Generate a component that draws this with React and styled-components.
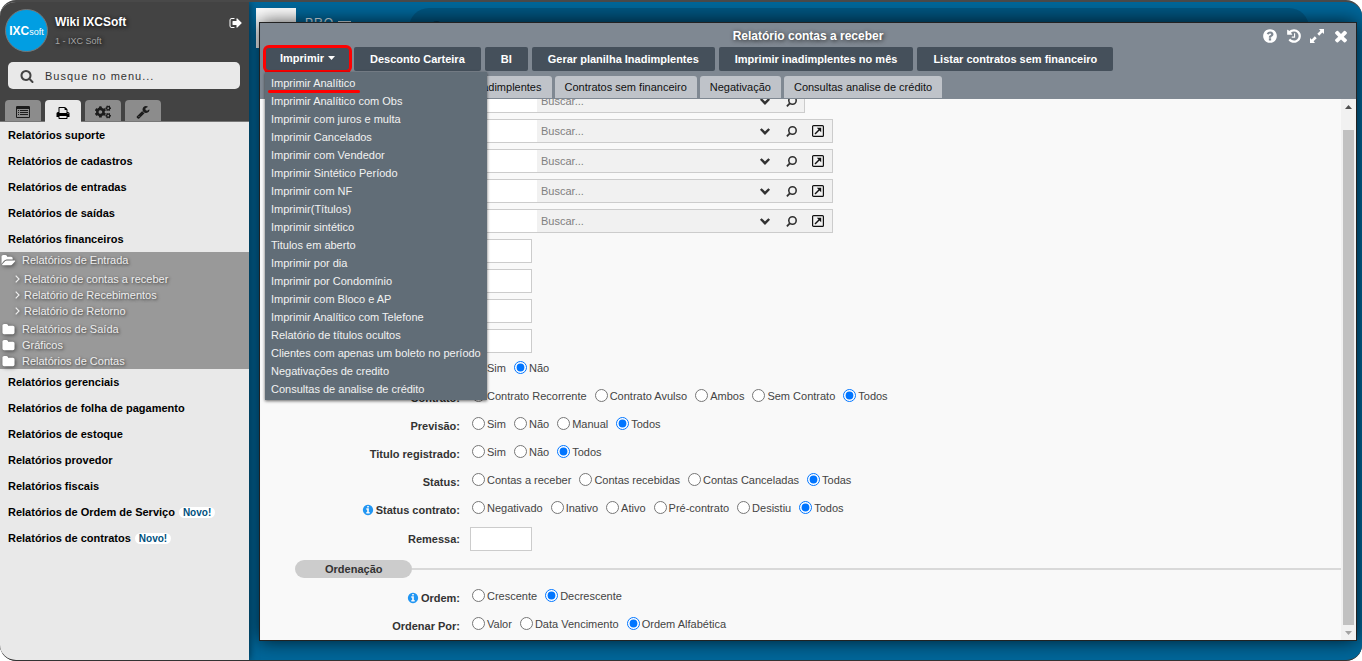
import React, { useLayoutEffect, useRef } from 'react';
import styled, { createGlobalStyle, css } from 'styled-components';
import { FaCogs } from 'react-icons/fa';

const GlobalStyle = createGlobalStyle`
  *, *::before, *::after { box-sizing: border-box; }
  body {
    margin: 0;
    background: #fff;
    color: #444;
    font: 11px/16px "Liberation Sans", Arial, sans-serif;
  }
  button, input { font: inherit; color: inherit; }
  ul { list-style: none; margin: 0; padding: 0; }
  a { color: inherit; text-decoration: none; }
`;

/* ---------- icons ---------- */

const GLYPHS = {
  search:
    'M1216 832q0-185-131.5-316.5t-316.5-131.5-316.5 131.5-131.5 316.5 131.5 316.5 316.5 131.5 316.5-131.5 131.5-316.5zm512 832q0 52-38 90t-90 38q-54 0-90-38l-343-342q-179 124-399 124-143 0-273.5-55.5t-225-150-150-225-55.5-273.5 55.5-273.5 150-225 225-150 273.5-55.5 273.5 55.5 225 150 150 225 55.5 273.5q0 220-124 399l343 343q37 37 37 90z',
  signOut:
    'M704 1440q0 4 1 20t.5 26.5-3 23.5-10 19.5-20.5 6.5h-320q-119 0-203.5-84.5t-84.5-203.5v-704q0-119 84.5-203.5t203.5-84.5h320q13 0 22.5 9.5t9.5 22.5q0 4 1 20t.5 26.5-3 23.5-10 19.5-20.5 6.5h-320q-66 0-113 47t-47 113v704q0 66 47 113t113 47h312l11.5 1 11.5 3 8 5.5 7 9 2 13.5zm928-544q0 26-19 45l-544 544q-19 19-45 19t-45-19-19-45v-288h-448q-26 0-45-19t-19-45v-384q0-26 19-45t45-19h448v-288q0-26 19-45t45-19 45 19l544 544q19 19 19 45z',
  list:
    'M160 128h1472q66 0 113 47t47 113v1216q0 66-47 113t-113 47h-1472q-66 0-113-47t-47-113v-1216q0-66 47-113t113-47zM128 512v992q0 32 32 32h1472q32 0 32-32v-992zM256 640h128v128h-128zM512 640h1024v128h-1024zM256 896h128v128h-128zM512 896h1024v128h-1024zM256 1152h128v128h-128zM512 1152h1024v128h-1024z',
  print:
    'M448 1536h896v-256h-896v256zm0-640h896v-384h-160q-40 0-68-28t-28-68v-160h-640v640zm1152 64q0-26-19-45t-45-19-45 19-19 45 19 45 45 19 45-19 19-45zm128 0v416q0 13-9.500 22.500t-22.500 9.500h-224v160q0 40-28 68t-68 28h-960q-40 0-68-28t-28-68v-160h-224q-13 0-22.500-9.500t-9.500-22.500v-416q0-79 56.500-135.500t135.500-56.500h64v-544q0-40 28-68t68-28h672q40 0 88 20t76 48l152 152q28 28 48 76t20 88v256h64q79 0 135.500 56.500t56.500 135.500z',
  wrench:
    'M448 1472q0-26-19-45t-45-19-45 19-19 45 19 45 45 19 45-19 19-45zm644-420l-682 682q-37 37-90 37-52 0-91-37l-106-108q-38-36-38-90 0-53 38-91l681-681q39 98 114.5 173.5t173.5 114.500zm634-435q0 39-23 106-47 134-164.5 217.5t-258.5 83.5q-185 0-316.500-131.500t-131.500-316.500 131.500-316.500 316.500-131.500q58 0 121.500 16.500t107.500 46.500q16 11 16 28t-16 28l-293 169v224l193 107q5-3 79-48.500t135.500-81 70.500-35.500q15 0 23.500 10t8.500 25z',
  folder:
    'M1728 608v704q0 92-66 158t-158 66h-1216q-92 0-158-66t-66-158v-960q0-92 66-158t158-66h320q92 0 158 66t66 158v32h672q92 0 158 66t66 158z',
  folderOpen:
    'M1815 952q0 31-31 66l-336 396q-43 51-120.5 86.5t-143.5 35.5h-1088q-34 0-60.5-13t-26.5-43q0-31 31-66l336-396q43-51 120.5-86.5t143.5-35.5h1088q34 0 60.5 13t26.5 43zm-343-344v160h-832q-94 0-197 47.5t-164 119.5l-337 396-5 6q0-4-.5-12.5t-.5-12.5v-960q0-92 66-158t158-66h320q92 0 158 66t66 158v32h544q92 0 158 66t66 158z',
  question:
    'M1024 1376v-192q0-14-9-23t-23-9h-192q-14 0-23 9t-9 23v192q0 14 9 23t23 9h192q14 0 23-9t9-23zm256-672q0-88-55.5-163t-138.5-116-170-41q-243 0-371 213-15 24 8 42l132 100q7 6 19 6 16 0 25-12 53-68 86-92 34-24 86-24 48 0 85.5 26t37.5 59q0 38-20 61t-68 45q-63 28-115.5 86.5t-52.5 125.5v36q0 14 9 23t23 9h192q14 0 23-9t9-23q0-19 21.5-49.5t54.5-49.5q32-18 49-28.5t46-35 44.5-48 28-60.5 12.5-81zm384 192q0 209-103 385.5t-279.5 279.5-385.5 103-385.5-103-279.5-279.5-103-385.5 103-385.5 279.5-279.5 385.5-103 385.5 103 279.5 279.5 103 385.5z',
  history:
    'M1664 896q0 156-61 298t-164 245-245 164-298 61q-172 0-327-72.5t-264-204.5q-7-10-6.5-22.5t8.5-20.5l137-138q10-9 25-9 16 2 23 12 73 95 179 147t225 52q104 0 198.5-40.5t163.5-109.5 109.5-163.5 40.5-198.5-40.5-198.5-109.5-163.5-163.5-109.5-198.5-40.5q-98 0-188 35.5t-160 101.5l137 138q31 30 14 69-17 40-59 40h-448q-26 0-45-19t-19-45v-448q0-42 40-59 39-17 69 14l130 129q107-101 244.5-156.5t284.5-55.5q156 0 298 61t245 164 164 245 61 298zm-640-288v448q0 14-9 23t-23 9h-320q-14 0-23-9t-9-23v-64q0-14 9-23t23-9h224v-352q0-14 9-23t23-9h64q14 0 23 9t9 23z',
  times:
    'M1490 1322q0 40-28 68l-136 136q-28 28-68 28t-68-28l-294-294-294 294q-28 28-68 28t-68-28l-136-136q-28-28-28-68t28-68l294-294-294-294q-28-28-28-68t28-68l136-136q28-28 68-28t68 28l294 294 294-294q28-28 68-28t68 28l136 136q28 28 28 68t-28 68l-294 294 294 294q28 28 28 68z',
  info:
    'M1152 1376v-160q0-14-9-23t-23-9h-96v-512q0-14-9-23t-23-9h-320q-14 0-23 9t-9 23v160q0 14 9 23t23 9h96v320h-96q-14 0-23 9t-9 23v160q0 14 9 23t23 9h448q14 0 23-9t9-23zm-128-896v-160q0-14-9-23t-23-9h-192q-14 0-23 9t-9 23v160q0 14 9 23t23 9h192q14 0 23-9t9-23zm640 416q0 209-103 385.5t-279.5 279.5-385.5 103-385.5-103-279.5-279.5-103-385.5 103-385.5 279.5-279.5 385.5-103 385.5 103 279.5 279.5 103 385.5z',
};

const Svg = styled.svg`
  display: block;
  flex: none;
  overflow: visible;
`;

const Glyph = ({ name, size = 14 }) => (
  <Svg width={size} height={size} viewBox="0 0 1792 1792" fill="currentColor" fillRule={name === 'list' ? 'evenodd' : 'nonzero'} aria-hidden="true">
    <path d={GLYPHS[name]} />
  </Svg>
);

const ExpandIcon = () => (
  <Svg width="14" height="14" viewBox="0 0 14 14" fill="currentColor" aria-hidden="true">
    <path d="M9 0H14v5L12.300 3.600 9.200 6.700 7.300 4.800l3.100-3.100zM5 14H0V9l1.700 1.400L4.800 7.300 6.700 9.200l-3.100 3.100z" />
  </Svg>
);

const ChevronDown = () => (
  <Svg width="10" height="7" viewBox="0 0 10 7" fill="none" stroke="#333" strokeWidth="2.400" aria-hidden="true">
    <path d="M0.800 1L5 5.200 9.200 1" />
  </Svg>
);

const Loupe = () => (
  <Svg width="11" height="11" viewBox="0 0 11 11" fill="none" stroke="#333" aria-hidden="true">
    <circle cx="6.500" cy="4.500" r="3.700" strokeWidth="1.600" />
    <path d="M4 7.200L0.900 10.300" strokeWidth="1.900" />
  </Svg>
);

const OpenBox = () => (
  <Svg width="12" height="12" viewBox="0 0 12 12" fill="none" stroke="#111" aria-hidden="true">
    <rect x="0.600" y="0.600" width="10.800" height="10.800" rx="1" strokeWidth="1.200" />
    <path d="M3 9L7.500 4.500" strokeWidth="1.500" />
    <path d="M4.800 2.800H9.200v4.400z" fill="#111" stroke="none" />
  </Svg>
);

const AngleRight = () => (
  <Svg width="5" height="8" viewBox="0 0 5 8" fill="none" stroke="currentColor" strokeWidth="1.200" aria-hidden="true">
    <path d="M0.700 0.700L4 4 0.700 7.300" />
  </Svg>
);

const Triangle = ({ down, color }) => (
  <Svg width="7" height="4" viewBox="0 0 7 4" fill={color} aria-hidden="true">
    <path d={down ? 'M0 0h7L3.500 4z' : 'M0 4h7L3.500 0z'} />
  </Svg>
);

/* ---------- page frame ---------- */

const Frame = styled.div`
  display: flex;
  height: 100vh;
  overflow: hidden;
  border-top: 2px solid #494949;
  border-bottom: 1px solid #333;
  border-radius: 16px;
  background: #494949;
`;

const IconButton = styled.button`
  display: flex;
  align-items: center;
  justify-content: center;
  padding: 0;
  border: 0;
  background: none;
  cursor: pointer;
`;

/* ---------- sidebar ---------- */

const Sidebar = styled.aside`
  position: relative;
  z-index: 2;
  display: flex;
  flex: none;
  flex-direction: column;
  width: 249px;
  background: #e9e9e9;
  box-shadow: 0 0 8px rgba(0, 0, 0, 0.6);
`;

const SidebarTop = styled.header`
  padding: 7px 9px 0 5px;
  border-bottom: 1px solid #777;
  background: #434343;
`;

const Profile = styled.div`
  display: flex;
  align-items: flex-start;
  gap: 7px;
  color: #fff;
`;

const Logo = styled.div`
  display: flex;
  align-items: center;
  justify-content: center;
  width: 43px;
  height: 43px;
  border: 1px solid #777;
  border-radius: 50%;
  background: #019ee2;
  color: #fff;
  font: bold 12px/12px "Liberation Sans", Arial, sans-serif;
`;

const LogoSmall = styled.span`
  padding-top: 3px;
  font-size: 9px;
  font-weight: normal;
`;

const Who = styled.div`
  flex: 1;
  padding-top: 5px;
  text-shadow: 1px 1px 4px #000;
`;

const UserName = styled.div`
  font-weight: bold;
  font-size: 12px;
  line-height: 16px;
`;

const Company = styled.div`
  padding-top: 5px;
  color: #a5a5a5;
  font-size: 9px;
  line-height: 12px;
`;

const LogoutButton = styled(IconButton)`
  width: 8px;
  height: 14px;
  margin-top: 7px;
`;

const MenuSearch = styled.label`
  display: flex;
  align-items: center;
  gap: 11px;
  height: 27px;
  margin: 10px 0 11px 3px;
  padding: 0 12px;
  border-radius: 5px;
  background: #e9e9e9;
  color: #444;
`;

const MenuSearchInput = styled.input`
  flex: 1;
  min-width: 0;
  padding: 0;
  border: 0;
  outline: 0;
  background: none;
  letter-spacing: 1px;
  &::placeholder { color: #333; opacity: 1; }
`;

const SideTabs = styled.nav`
  display: flex;
  gap: 4px;
`;

const SideTab = styled(IconButton)`
  width: 36px;
  height: 21px;
  padding-top: 3px;
  border-radius: 4px 4px 0 0;
  background: ${(p) => (p.$active ? '#e9e9e9' : '#8c8c8c')};
  color: ${(p) => (p.$active ? '#000' : '#1c1c1c')};
  ${(p) => p.$active && css`margin-bottom: -1px; height: 22px;`}
`;

const MenuLink = styled.a`
  display: flex;
  align-items: center;
  gap: 4px;
  height: 26px;
  padding-left: 8px;
  color: #000;
  font-weight: bold;
`;

const Tag = styled.span`
  padding: 0 4px;
  border-radius: 6px;
  background: #fff;
  color: #00517e;
  font-size: 10px;
  line-height: 11px;
`;

const SubMenu = styled.ul`
  background: #999;
  color: #eee;
  text-shadow: 1px 1px 3px #333;
  svg { filter: drop-shadow(1px 1px 2px #444); }
`;

const FolderLink = styled.a`
  display: grid;
  grid-template-columns: 20px 1fr;
  align-items: center;
  height: 16px;
  padding-left: 2px;
  svg { color: #fff; }
`;

const LeafList = styled.ul`
  padding: 3px 0 2px 15px;
`;

const LeafLink = styled.a`
  display: grid;
  grid-template-columns: 9px 1fr;
  align-items: center;
  height: 16px;
`;

/* ---------- desktop and window ---------- */

const Desktop = styled.main`
  position: relative;
  flex: 1;
  min-width: 0;
  background: #006699;
`;

const AppBar = styled.div`
  display: flex;
  padding: 6px 53px 0 7px;
`;

const AppLogo = styled.div`
  width: 40px;
  height: 40px;
  background: #fff;
`;

const Brand = styled.div`
  display: flex;
  align-items: center;
  gap: 4px;
  width: 113px;
  height: 30px;
  padding-left: 9px;
  color: #dde9f0;
  font-size: 12px;
  letter-spacing: 1px;
`;

const BrandRule = styled.span`
  width: 13px;
  height: 4px;
  background: #dde9f0;
`;

const AppSearch = styled.div`
  flex: 1;
  height: 40px;
  padding: 12px 22px;
  border-radius: 20px;
  background: #005580;
  color: #003c5c;
`;

const Window = styled.section`
  position: absolute;
  inset: 20px 5px 19px 10px;
  display: flex;
  flex-direction: column;
  border: 1px solid #222;
  background: #f9f9f9;
  box-shadow: 0 0 18px rgba(0, 0, 0, 0.75);
`;

const WindowHead = styled.header`
  padding-left: 5px;
  border-bottom: 1px solid #7f8892;
  background: #7f8892;
`;

const TitleBar = styled.div`
  display: grid;
  grid-template-columns: 1fr auto 1fr;
  align-items: center;
  height: 24px;
  padding: 2px 6px 0 1px;
  color: #fff;
`;

const Title = styled.h1`
  grid-column: 2;
  margin: 0;
  font-size: 12px;
  line-height: 16px;
  text-shadow: 1px 1px 4px #222;
`;

const WindowTools = styled.div`
  display: flex;
  justify-content: flex-end;
  gap: 8px;
`;

const Actions = styled.div`
  display: flex;
  gap: 4px;
`;

const ActionButton = styled.button`
  display: flex;
  align-items: center;
  gap: 4px;
  height: 24px;
  padding: 0 16px;
  border: 0;
  border-radius: 2px;
  background: #45505b;
  color: #fff;
  font-weight: bold;
  white-space: nowrap;
  cursor: pointer;
  ${(p) => p.$marked && css`
    padding: 0 15px 2px;
    border-radius: 4px;
    box-shadow: 0 0 0 2px #f00, inset 0 0 0 1px #f00;
  `}
`;

const MenuAnchor = styled.div`
  position: relative;
`;

const PrintMenu = styled.ul`
  position: absolute;
  z-index: 5;
  top: 25px;
  left: 0;
  padding: 2px 0;
  background: #616d77;
  box-shadow: 0 1px 3px rgba(0, 0, 0, 0.6);
`;

const PrintItem = styled.button`
  position: relative;
  display: block;
  width: 100%;
  height: 18px;
  padding: 0 6px;
  border: 0;
  background: none;
  color: #f2f2f2;
  text-align: left;
  white-space: nowrap;
  cursor: pointer;
  ${(p) => p.$marked && css`
    &::after {
      content: "";
      position: absolute;
      top: 16px;
      left: 3px;
      width: 92px;
      height: 3px;
      border-radius: 2px;
      background: #f00;
    }
  `}
`;

const ReportTabs = styled.div`
  display: flex;
  gap: 3px;
  padding: 5px 0 0;
`;

const ReportTab = styled.button`
  height: 22px;
  padding: 0 10px;
  border: 0;
  border-radius: 3px 3px 0 0;
  background: #bfc3c9;
  color: #111;
  white-space: nowrap;
  ${(p) => p.$active && css`
    min-width: 195px;
    background: #f9f9f9;
  `}
`;

const WindowBody = styled.div`
  display: flex;
  flex: 1;
  min-height: 0;
`;

const Form = styled.form`
  flex: 1;
  min-width: 0;
  overflow-y: auto;
  scrollbar-width: none;
  padding-bottom: 3px;
`;

const ScrollTrack = styled.div`
  display: flex;
  flex-direction: column;
  align-items: center;
  width: 15px;
  background: #f1f1f1;
`;

const ScrollArrow = styled.div`
  display: flex;
  align-items: center;
  height: ${(p) => (p.$end ? 15 : 16)}px;
`;

const ScrollThumb = styled.div`
  flex: 1;
  width: 11px;
  margin-top: 15px;
  background: #c1c1c1;
`;

/* ---------- form parts ---------- */

const Row = styled.div`
  display: grid;
  grid-template-columns: 200px 1fr;
  column-gap: 10px;
  align-items: center;
  height: ${(p) => (p.$radio ? 28 : 30)}px;
  padding-top: ${(p) => (p.$radio ? 1 : 6)}px;
`;

const RowLabel = styled.label`
  display: flex;
  align-items: center;
  justify-content: flex-end;
  gap: 2px;
  padding-top: ${(p) => (p.$low ? 4 : 0)}px;
  color: #333;
  font-weight: bold;
  white-space: nowrap;
  svg { color: #2196f3; }
`;

const Combo = styled.div`
  display: flex;
  width: ${(p) => (p.$short ? 335 : 363)}px;
  height: 24px;
  border: 1px solid #ccc;
  background: #f1f1f1;
`;

const CodeInput = styled.input`
  width: 66px;
  padding: 0 4px;
  border: 0;
  background: #fff;
`;

const SearchInput = styled.input`
  flex: 1;
  min-width: 0;
  padding: 0 4px;
  border: 0;
  background: none;
  &::placeholder { color: #808080; opacity: 1; }
`;

const ComboButton = styled(IconButton)`
  width: ${(p) => (p.$wide ? 28 : 26)}px;
`;

const SmallInput = styled.input`
  width: 62px;
  height: 24px;
  padding: 0 4px;
  border: 1px solid #ccc;
  background: #fff;
`;

const Options = styled.div`
  display: flex;
  gap: 6px;
`;

const Option = styled.label`
  display: flex;
  align-items: center;
  color: #444;
  white-space: nowrap;
`;

const Radio = styled.input`
  width: 13px;
  height: 13px;
  margin: 0 2px;
`;

const Section = styled.fieldset`
  margin: 0;
  padding: 0;
  border: 0;
`;

const SectionHead = styled.legend`
  display: flex;
  align-items: center;
  width: 100%;
  height: 30px;
  padding: 6px 0 0 35px;
  &::after {
    content: "";
    flex: 1;
    height: 2px;
    background: #d9d9d9;
  }
`;

const SectionName = styled.span`
  padding: 0 30px;
  border-radius: 9px;
  background: #ccc;
  color: #333;
  font-weight: bold;
  line-height: 18px;
`;

/* ---------- data ---------- */

const MENU_TOP = ['Relatórios suporte', 'Relatórios de cadastros', 'Relatórios de entradas', 'Relatórios de saídas', 'Relatórios financeiros'];
const MENU_LEAVES = ['Relatório de contas a receber', 'Relatório de Recebimentos', 'Relatório de Retorno'];
const MENU_FOLDERS = ['Relatórios de Saída', 'Gráficos', 'Relatórios de Contas'];
const MENU_BOTTOM = ['Relatórios gerenciais', 'Relatórios de folha de pagamento', 'Relatórios de estoque', 'Relatórios provedor', 'Relatórios fiscais'];
const MENU_NEW = ['Relatórios de Ordem de Serviço', 'Relatórios de contratos'];

const SIDE_TABS = [
  ['Cadastros', <Glyph name="list" size={14} />],
  ['Relatórios', <Glyph name="print" size={14} />],
  ['Configurações', <FaCogs size={16} />],
  ['Ferramentas', <Glyph name="wrench" size={14} />],
];

const PRINT_ITEMS = [
  'Imprimir Analítico', 'Imprimir Analítico com Obs', 'Imprimir com juros e multa', 'Imprimir Cancelados',
  'Imprimir com Vendedor', 'Imprimir Sintético Período', 'Imprimir com NF', 'Imprimir(Títulos)',
  'Imprimir sintético', 'Titulos em aberto', 'Imprimir por dia', 'Imprimir por Condomínio',
  'Imprimir com Bloco e AP', 'Imprimir Analítico com Telefone', 'Relatório de títulos ocultos',
  'Clientes com apenas um boleto no período', 'Negativações de credito', 'Consultas de analise de crédito',
];

const ACTIONS = ['Desconto Carteira', 'BI', 'Gerar planilha Inadimplentes', 'Imprimir inadimplentes no mês', 'Listar contratos sem financeiro'];
const TABS = ['Inadimplentes', 'Contratos sem financeiro', 'Negativação', 'Consultas analise de crédito'];

/* ---------- composed parts ---------- */

const ComboRow = ({ short, name }) => (
  <Row>
    <span />
    <Combo $short={short}>
      <CodeInput aria-label={`Código ${name}`} />
      <SearchInput aria-label={`Buscar ${name}`} placeholder="Buscar..." />
      <ComboButton type="button" aria-label="Abrir lista"><ChevronDown /></ComboButton>
      <ComboButton type="button" aria-label="Pesquisar"><Loupe /></ComboButton>
      {!short && <ComboButton type="button" $wide aria-label="Abrir cadastro"><OpenBox /></ComboButton>}
    </Combo>
  </Row>
);

const RadioRow = ({ label, name, options, value, info }) => (
  <Row $radio role="radiogroup" aria-label={label || name}>
    <RowLabel as="span" $low>
      {info && <Glyph name="info" size={12} />}
      {label}
    </RowLabel>
    <Options>
      {options.map((o) => (
        <Option key={o}>
          <Radio type="radio" name={name} defaultChecked={o === value} />
          {o}
        </Option>
      ))}
    </Options>
  </Row>
);

const ReportForm = () => {
  const form = useRef(null);
  useLayoutEffect(() => {
    form.current.scrollTop = form.current.scrollHeight;
  }, []);
  return (
    <Form ref={form}>
      <ComboRow short name="1" />
      {['2', '3', '4', '5'].map((n) => <ComboRow key={n} name={n} />)}
      {['1', '2', '3', '4'].map((n) => (
        <Row key={n}>
          <span />
          <SmallInput aria-label={`Campo ${n}`} />
        </Row>
      ))}
      <RadioRow name="carteira" options={['Sim', 'Não']} value="Não" />
      <RadioRow label="Contrato:" name="contrato" options={['Contrato Recorrente', 'Contrato Avulso', 'Ambos', 'Sem Contrato', 'Todos']} value="Todos" />
      <RadioRow label="Previsão:" name="previsao" options={['Sim', 'Não', 'Manual', 'Todos']} value="Todos" />
      <RadioRow label="Titulo registrado:" name="registrado" options={['Sim', 'Não', 'Todos']} value="Todos" />
      <RadioRow label="Status:" name="status" options={['Contas a receber', 'Contas recebidas', 'Contas Canceladas', 'Todas']} value="Todas" />
      <RadioRow info label="Status contrato:" name="statusContrato" options={['Negativado', 'Inativo', 'Ativo', 'Pré-contrato', 'Desistiu', 'Todos']} value="Todos" />
      <Row>
        <RowLabel htmlFor="remessa">Remessa:</RowLabel>
        <SmallInput id="remessa" />
      </Row>
      <Section>
        <SectionHead><SectionName>Ordenação</SectionName></SectionHead>
        <RadioRow info label="Ordem:" name="ordem" options={['Crescente', 'Decrescente']} value="Decrescente" />
        <RadioRow label="Ordenar Por:" name="ordenar" options={['Valor', 'Data Vencimento', 'Ordem Alfabética']} value="Ordem Alfabética" />
      </Section>
    </Form>
  );
};

const SideMenu = () => (
  <nav>
    {MENU_TOP.map((t) => <MenuLink href="#" key={t}>{t}</MenuLink>)}
    <SubMenu>
      <li>
        <FolderLink href="#"><Glyph name="folderOpen" size={13} />Relatórios de Entrada</FolderLink>
        <LeafList>
          {MENU_LEAVES.map((t) => <li key={t}><LeafLink href="#"><AngleRight />{t}</LeafLink></li>)}
        </LeafList>
      </li>
      {MENU_FOLDERS.map((t) => <li key={t}><FolderLink href="#"><Glyph name="folder" size={13} />{t}</FolderLink></li>)}
    </SubMenu>
    {MENU_BOTTOM.map((t) => <MenuLink href="#" key={t}>{t}</MenuLink>)}
    {MENU_NEW.map((t) => <MenuLink href="#" key={t}>{t}<Tag>Novo!</Tag></MenuLink>)}
  </nav>
);

export default function App() {
  return (
    <>
      <GlobalStyle />
      <Frame>
        <Sidebar>
          <SidebarTop>
            <Profile>
              <Logo>IXC<LogoSmall>soft</LogoSmall></Logo>
              <Who>
                <UserName>Wiki IXCSoft</UserName>
                <Company>1 - IXC Soft</Company>
              </Who>
              <LogoutButton aria-label="Sair"><Glyph name="signOut" size={14} /></LogoutButton>
            </Profile>
            <MenuSearch>
              <Glyph name="search" size={14} />
              <MenuSearchInput aria-label="Busque no menu" placeholder="Busque no menu..." />
            </MenuSearch>
            <SideTabs>
              {SIDE_TABS.map(([label, icon], i) => (
                <SideTab key={label} aria-label={label} $active={i === 1}>{icon}</SideTab>
              ))}
            </SideTabs>
          </SidebarTop>
          <SideMenu />
        </Sidebar>

        <Desktop>
          <AppBar>
            <AppLogo />
            <Brand>PRO<BrandRule /></Brand>
            <AppSearch><Glyph name="search" size={13} /></AppSearch>
          </AppBar>

          <Window>
            <WindowHead>
              <TitleBar>
                <Title>Relatório contas a receber</Title>
                <WindowTools>
                  <IconButton aria-label="Ajuda"><Glyph name="question" size={16} /></IconButton>
                  <IconButton aria-label="Histórico"><Glyph name="history" size={16} /></IconButton>
                  <IconButton aria-label="Expandir"><ExpandIcon /></IconButton>
                  <IconButton aria-label="Fechar"><Glyph name="times" size={18} /></IconButton>
                </WindowTools>
              </TitleBar>
              <Actions>
                <MenuAnchor>
                  <ActionButton $marked aria-haspopup="true" aria-expanded="true">Imprimir<Triangle down color="#fff" /></ActionButton>
                  <PrintMenu>
                    {PRINT_ITEMS.map((t, i) => <li key={t}><PrintItem $marked={i === 0}>{t}</PrintItem></li>)}
                  </PrintMenu>
                </MenuAnchor>
                {ACTIONS.map((t) => <ActionButton key={t}>{t}</ActionButton>)}
              </Actions>
              <ReportTabs>
                <ReportTab $active aria-label="Filtros" />
                {TABS.map((t) => <ReportTab key={t}>{t}</ReportTab>)}
              </ReportTabs>
            </WindowHead>
            <WindowBody>
              <ReportForm />
              <ScrollTrack>
                <ScrollArrow><Triangle color="#505050" /></ScrollArrow>
                <ScrollThumb />
                <ScrollArrow $end><Triangle down color="#a3a3a3" /></ScrollArrow>
              </ScrollTrack>
            </WindowBody>
          </Window>
        </Desktop>
      </Frame>
    </>
  );
}
